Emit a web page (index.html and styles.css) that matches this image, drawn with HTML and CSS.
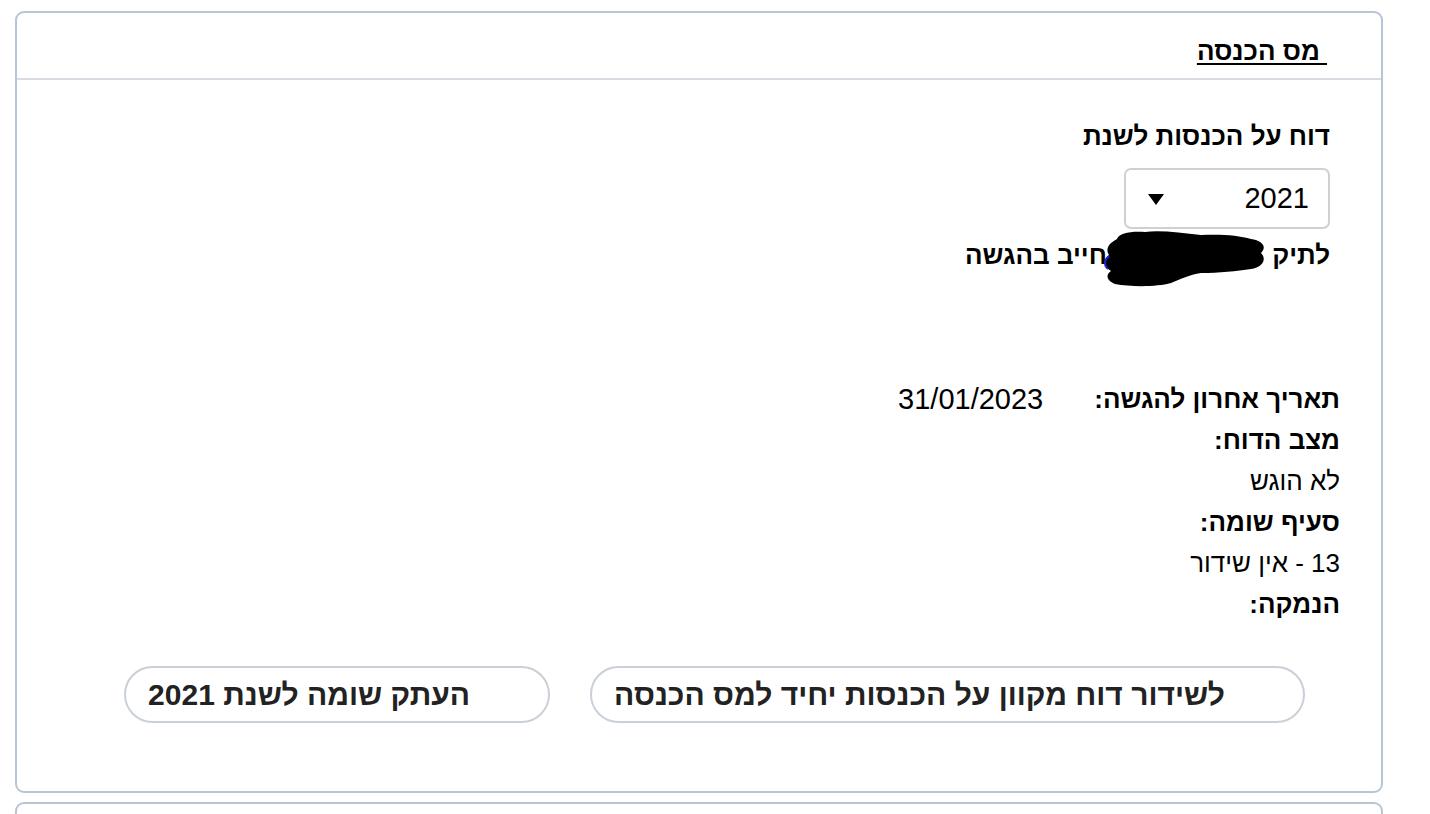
FILE: index.html
```html
<!DOCTYPE html>
<html lang="he" dir="rtl">
<head>
<meta charset="utf-8">
<title>מס הכנסה</title>
<link rel="stylesheet" href="styles.css">
</head>
<body>
<div class="page">
  <section class="card">
    <header class="card-head">
      <h2 class="card-title"><u>&nbsp;מס הכנסה</u></h2>
    </header>
    <div class="card-body">
      <div class="year-block">
        <div class="field-label">דוח על הכנסות לשנת</div>
        <div class="select"><span class="select-value">2021</span><svg class="select-arrow" width="16" height="11" viewBox="0 0 16 11"><path d="M0 0 H16 L8 11 Z" fill="#000"/></svg></div>
        <div class="file-line">לתיק <span class="redact"><svg width="170" height="58" viewBox="0 0 170 58"><path d="M16 10 C18 4 30 2 44 3 C60 1 80 4 100 6 C118 5 138 6 150 10 C162 12 166 18 160 24 C166 30 162 38 150 40 C136 42 118 44 100 44 C88 46 80 50 70 54 C56 58 30 58 14 55 C6 52 4 46 10 42 C2 38 2 30 8 26 C4 20 8 14 16 10 Z" fill="#000"/><path d="M8 27 C3 31 3 37 7 40" stroke="#2020d0" stroke-width="2" fill="none"/></svg></span>חייב בהגשה</div>
      </div>
      <div class="info">
        <div class="info-row"><span class="info-label">תאריך אחרון להגשה:</span><span class="info-value">31/01/2023</span></div>
        <div class="info-label">מצב הדוח:</div>
        <div class="info-text">לא הוגש</div>
        <div class="info-label">סעיף שומה:</div>
        <div class="info-text">13 - אין שידור</div>
        <div class="info-label">הנמקה:</div>
      </div>
      <div class="actions">
        <button class="pill-btn" type="button">לשידור דוח מקוון על הכנסות יחיד למס הכנסה</button>
        <button class="pill-btn" type="button">העתק שומה לשנת 2021</button>
      </div>
    </div>
  </section>
  <section class="card card-next"></section>
</div>
</body>
</html>
```

FILE: styles.css
```css
html, body {
  margin: 0;
  padding: 0;
  background: #fff;
}
body {
  font-family: Arial, "Liberation Sans", sans-serif;
  color: #000;
  overflow: hidden;
  height: 814px;
}
.page {
  padding: 11px 47px 0 15px;
  display: flex;
  flex-direction: column;
  gap: 9px;
}
.card {
  border: 2px solid #b6c6d6;
  border-radius: 9px;
  background: #fff;
}
.card-head {
  height: 65px;
  border-bottom: 2px solid #d8dce2;
  display: flex;
  align-items: center;
  padding: 0 54px 0 0;
}
.card-title {
  margin: 0;
  font-size: 26px;
  font-weight: bold;
  line-height: 32px;
  padding-top: 10px;
}
.card-title u {
  text-decoration-thickness: 2px;
  text-underline-offset: 3px;
}
.card-body {
  padding: 38px 0 68px 0;
}
.year-block {
  padding-right: 51px;
  display: flex;
  flex-direction: column;
  align-items: flex-start;
}
.field-label {
  font-size: 26px;
  font-weight: bold;
  line-height: 36px;
}
.select {
  margin-top: 14px;
  box-sizing: border-box;
  width: 206px;
  height: 61px;
  border: 2px solid #d0d0d0;
  border-radius: 7px;
  display: flex;
  align-items: center;
  justify-content: space-between;
  padding: 0 19px 0 22px;
}
.select-value {
  font-size: 29px;
}
.select-arrow {
  display: block;
  margin-top: 2px;
}
.file-line {
  margin-top: 8px;
  font-size: 26px;
  font-weight: bold;
  line-height: 36px;
  white-space: nowrap;
}
.redact {
  display: inline-block;
  width: 158px;
  height: 36px;
  vertical-align: top;
  position: relative;
}
.redact svg {
  position: absolute;
  right: -6px;
  top: -8px;
}
.info {
  margin-top: 106px;
  padding-right: 41px;
  font-size: 26px;
  line-height: 41px;
}
.info-row {
  display: flex;
  gap: 51px;
}
.info-label {
  font-weight: bold;
}
.info-value {
  font-size: 29px;
}
.info-text {
  font-size: 26px;
}
.actions {
  margin-top: 41px;
  display: flex;
  gap: 40px;
  padding-right: 76px;
}
.pill-btn {
  font-family: Arial, "Liberation Sans", sans-serif;
  font-size: 30px;
  font-weight: bold;
  color: #222;
  background: #fff;
  border: 2px solid #c9d0d8;
  border-radius: 30px;
  height: 57px;
  padding: 0 78px 0 22px;
  cursor: pointer;
}
.card-next {
  height: 40px;
  border-radius: 9px 9px 0 0;
}
```
